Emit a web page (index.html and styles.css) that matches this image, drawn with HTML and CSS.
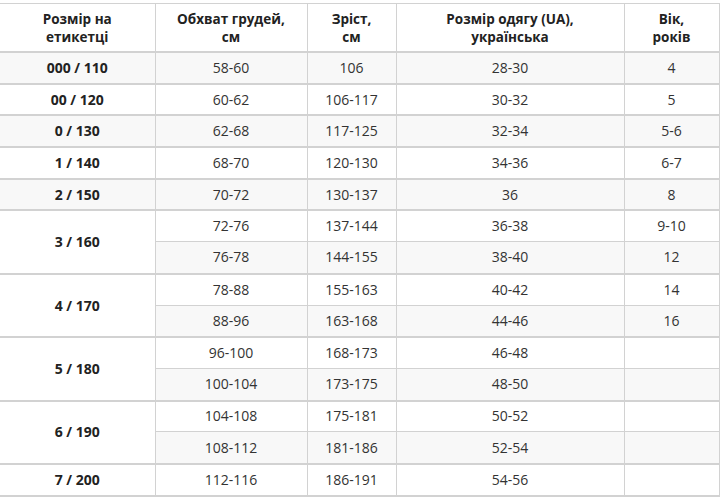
FILE: index.html
```html
<!DOCTYPE html>
<html lang="uk">
<head>
<meta charset="utf-8">
<title>Таблиця розмірів</title>
<link rel="stylesheet" href="styles.css">
</head>
<body>
<table class="sizes">
  <colgroup>
    <col class="c1"><col class="c2"><col class="c3"><col class="c4"><col class="c5">
  </colgroup>
  <tbody>
    <tr class="head">
      <th>Розмір на<br>етикетці</th>
      <th>Обхват грудей,<br>см</th>
      <th>Зріст,<br>см</th>
      <th>Розмір одягу (UA),<br>українська</th>
      <th>Вік,<br>років</th>
    </tr>
    <tr class="grp"><td class="lbl">000 / 110</td><td>58-60</td><td>106</td><td>28-30</td><td>4</td></tr>
    <tr class="grp"><td class="lbl">00 / 120</td><td>60-62</td><td>106-117</td><td>30-32</td><td>5</td></tr>
    <tr class="grp"><td class="lbl">0 / 130</td><td>62-68</td><td>117-125</td><td>32-34</td><td>5-6</td></tr>
    <tr class="grp"><td class="lbl">1 / 140</td><td>68-70</td><td>120-130</td><td>34-36</td><td>6-7</td></tr>
    <tr class="grp"><td class="lbl">2 / 150</td><td>70-72</td><td>130-137</td><td>36</td><td>8</td></tr>
    <tr class="grp"><td class="lbl" rowspan="2">3 / 160</td><td>72-76</td><td>137-144</td><td>36-38</td><td>9-10</td></tr>
    <tr class="sub"><td>76-78</td><td>144-155</td><td>38-40</td><td>12</td></tr>
    <tr class="grp"><td class="lbl" rowspan="2">4 / 170</td><td>78-88</td><td>155-163</td><td>40-42</td><td>14</td></tr>
    <tr class="sub"><td>88-96</td><td>163-168</td><td>44-46</td><td>16</td></tr>
    <tr class="grp"><td class="lbl" rowspan="2">5 / 180</td><td>96-100</td><td>168-173</td><td>46-48</td><td></td></tr>
    <tr class="sub"><td>100-104</td><td>173-175</td><td>48-50</td><td></td></tr>
    <tr class="grp"><td class="lbl" rowspan="2">6 / 190</td><td>104-108</td><td>175-181</td><td>50-52</td><td></td></tr>
    <tr class="sub"><td>108-112</td><td>181-186</td><td>52-54</td><td></td></tr>
    <tr class="grp"><td class="lbl">7 / 200</td><td>112-116</td><td>186-191</td><td>54-56</td><td></td></tr>
  </tbody>
</table>
</body>
</html>
```
FILE: styles.css
```css
html, body {
  margin: 0;
  padding: 0;
  background: #ffffff;
}
body {
  font-family: "Open Sans", "Noto Sans", sans-serif;
  font-size: 14px;
  color: #333333;
  padding-top: 3px;
}
.sizes {
  border-collapse: collapse;
  width: 719px;
  table-layout: fixed;
}
.c1 { width: 155px; }
.c2 { width: 152px; }
.c3 { width: 89px; }
.c4 { width: 228px; }
.c5 { width: 95px; }
.sizes th,
.sizes td {
  border: 1px solid #d2d2d2;
  text-align: center;
  vertical-align: middle;
  padding: 0;
  line-height: 18px;
}
.sizes th:first-child,
.sizes td.lbl {
  border-left: none;
}
.sizes th {
  font-weight: 700;
  color: #222222;
  height: 47px;
  font-size: 13.5px;
}
.sizes td {
  height: 29.7px;
}
.sizes tr.sub td {
  height: 30.7px;
}
.sizes td.lbl {
  font-weight: 700;
  color: #222222;
}
.sizes tr:nth-child(even) td {
  background: #f8f8f8;
}
.sizes tr.grp td {
  border-top: 2px solid #d2d2d2;
}
.sizes tr:last-child td {
  border-bottom: 2px solid #d2d2d2;
}
```
